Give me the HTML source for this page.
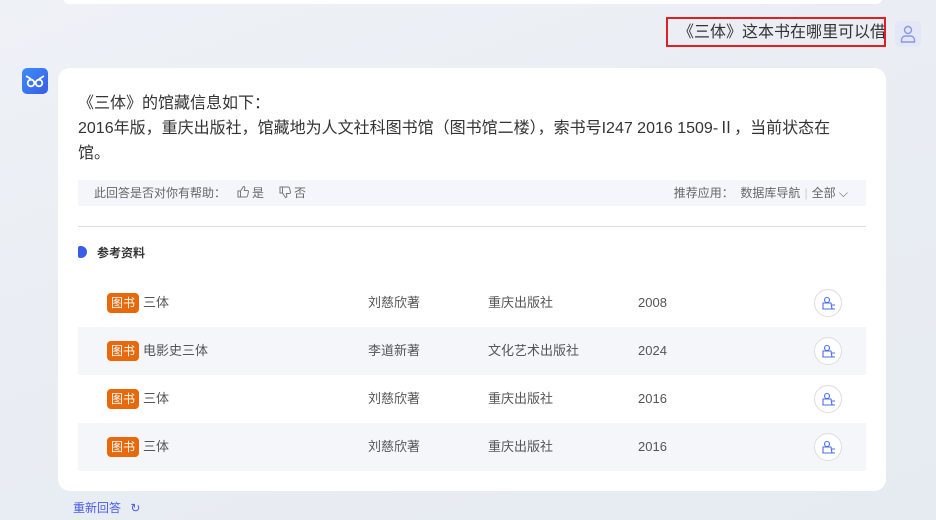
<!DOCTYPE html>
<html><head><meta charset="utf-8"><style>
*{margin:0;padding:0;box-sizing:border-box}
body{width:936px;height:520px;overflow:hidden;background:linear-gradient(160deg,#eef1f6 0%,#e9edf3 50%,#e6ebf2 100%);font-family:"Liberation Sans","Noto Sans CJK SC",sans-serif;position:relative;color:#333}
.abs{position:absolute}
.card{left:58px;top:68px;width:828px;height:423px;background:#fff;border-radius:12px}
.row{position:absolute;left:20px;width:788px;height:48px;font-size:13px;color:#555}
.row span{position:absolute;top:15px;line-height:18px}
.row span.badge{background:#e8690c;color:#fff;border-radius:4px;padding:0 4px;font-size:12px;line-height:20px;top:14px}
.circ{position:absolute;left:736px;top:10px;width:28px;height:28px;border:1px solid #dcdce4;border-radius:50%;background:#fff}
svg.i{vertical-align:-2px}
</style></head><body>
<div class="abs" style="left:63px;top:-10px;width:819px;height:14px;background:#fff;border-radius:6px"></div>
<div class="abs" style="left:666px;top:17px;width:220px;height:30px;border:2px solid #e02020"></div>
<div class="abs" style="left:678px;top:23px;font-size:16px;color:#333;white-space:nowrap;width:206px;overflow:hidden;line-height:20px">《三体》这本书在哪里可以借</div>
<div class="abs" style="left:895px;top:21px;width:26px;height:26px;background:#e4e7f6;border-radius:5px">
<svg width="26" height="26" viewBox="0 0 26 26"><circle cx="13" cy="9" r="3.5" fill="none" stroke="#8c95e8" stroke-width="1.4"/><path d="M6.5 21v-2a4 4 0 0 1 4-4h5a4 4 0 0 1 4 4v2z" fill="none" stroke="#8c95e8" stroke-width="1.4"/></svg></div>
<div class="abs" style="left:22px;top:68px;width:26px;height:26px;border-radius:5px;background:linear-gradient(135deg,#3c8cf8,#3a5de8)">
<svg width="26" height="26" viewBox="0 0 26 26"><path d="M4 8l5 3M22 8l-5 3" stroke="#fff" stroke-width="1.8"/><circle cx="9" cy="15" r="3.3" fill="none" stroke="#fff" stroke-width="1.8"/><circle cx="17" cy="15" r="3.3" fill="none" stroke="#fff" stroke-width="1.8"/></svg></div>
<div class="abs card">
<div class="abs" style="left:20px;top:23px;font-size:16px;line-height:25px;color:#333;width:780px">《三体》的馆藏信息如下：<br>2016年版，重庆出版社，馆藏地为人文社科图书馆（图书馆二楼），索书号I247 2016 1509-Ⅱ，当前状态在馆。</div>
<div class="abs" style="left:20px;top:112px;width:788px;height:26px;background:#f5f6fb;font-size:12px;color:#666;line-height:26px">
<span style="position:absolute;left:16px">此回答是否对你有帮助：<svg class="i" width="14" height="14" viewBox="0 0 14 14" style="margin-left:10px;margin-right:2px"><path d="M2 6h2.5v6H2zM4.5 6l3-4.5c1 0 1.5.6 1.3 1.6L8.3 5.5h3.2c.7 0 1.1.6 1 1.2l-1 4.3c-.2.6-.6 1-1.2 1H4.5" fill="none" stroke="#777" stroke-width="1"/></svg>是<svg class="i" width="14" height="14" viewBox="0 0 14 14" style="margin-left:14px;margin-right:2px"><path d="M2 2h2.5v6H2zM4.5 8l3 4.5c1 0 1.5-.6 1.3-1.6L8.3 8.5h3.2c.7 0 1.1-.6 1-1.2l-1-4.3c-.2-.6-.6-1-1.2-1H4.5" fill="none" stroke="#777" stroke-width="1"/></svg>否</span>
<span style="position:absolute;right:18px">推荐应用：&nbsp;&nbsp;数据库导航<span style="color:#ccc;margin:0 4px">|</span>全部 ⌵</span></div>
<div class="abs" style="left:20px;top:158px;width:788px;height:1px;background:#dcdce4"></div>
<div class="abs" style="left:20px;top:178px;width:9px;height:12px;background:#3a5de8;border-radius:2px 6px 6px 2px"></div>
<div class="abs" style="left:39px;top:176px;font-size:12px;color:#333;font-weight:bold">参考资料</div>
<div class="row" style="top:211px"><span class="badge" style="left:29px">图书</span><span style="left:65px">三体</span><span style="left:290px">刘慈欣著</span><span style="left:410px">重庆出版社</span><span style="left:560px">2008</span><div class="circ"><svg width="26" height="26" viewBox="0 0 26 26"><circle cx="12" cy="10" r="2.5" fill="none" stroke="#4a6cf0" stroke-width="1.1"/><path d="M8 13h8l1 6H8zM17 15h3M16 19h4" fill="none" stroke="#4a6cf0" stroke-width="1.1"/></svg></div></div>
<div class="row" style="top:259px;background:#f5f6fa"><span class="badge" style="left:29px">图书</span><span style="left:65px">电影史三体</span><span style="left:290px">李道新著</span><span style="left:410px">文化艺术出版社</span><span style="left:560px">2024</span><div class="circ"><svg width="26" height="26" viewBox="0 0 26 26"><circle cx="12" cy="10" r="2.5" fill="none" stroke="#4a6cf0" stroke-width="1.1"/><path d="M8 13h8l1 6H8zM17 15h3M16 19h4" fill="none" stroke="#4a6cf0" stroke-width="1.1"/></svg></div></div>
<div class="row" style="top:307px"><span class="badge" style="left:29px">图书</span><span style="left:65px">三体</span><span style="left:290px">刘慈欣著</span><span style="left:410px">重庆出版社</span><span style="left:560px">2016</span><div class="circ"><svg width="26" height="26" viewBox="0 0 26 26"><circle cx="12" cy="10" r="2.5" fill="none" stroke="#4a6cf0" stroke-width="1.1"/><path d="M8 13h8l1 6H8zM17 15h3M16 19h4" fill="none" stroke="#4a6cf0" stroke-width="1.1"/></svg></div></div>
<div class="row" style="top:355px;background:#f5f6fa"><span class="badge" style="left:29px">图书</span><span style="left:65px">三体</span><span style="left:290px">刘慈欣著</span><span style="left:410px">重庆出版社</span><span style="left:560px">2016</span><div class="circ"><svg width="26" height="26" viewBox="0 0 26 26"><circle cx="12" cy="10" r="2.5" fill="none" stroke="#4a6cf0" stroke-width="1.1"/><path d="M8 13h8l1 6H8zM17 15h3M16 19h4" fill="none" stroke="#4a6cf0" stroke-width="1.1"/></svg></div></div>
</div>
<div class="abs" style="left:73px;top:499px;font-size:12px;color:#4a5ae8">重新回答 <span style="margin-left:6px">↻</span></div>
</body></html>
